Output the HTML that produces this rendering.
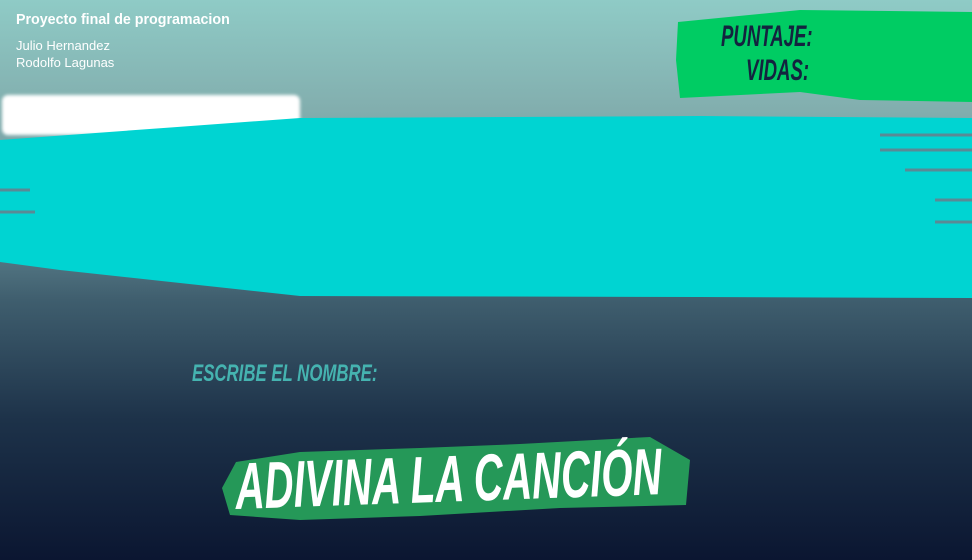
<!DOCTYPE html>
<html><head><meta charset="utf-8"><style>
body{margin:0;width:972px;height:560px;overflow:hidden;position:relative;font-family:"Liberation Sans",sans-serif;
background:linear-gradient(#8fcbc6 0px,#82aeae 110px,#6f98a0 200px,#3f5e6e 300px,#1d3249 420px,#0b1631 560px);}
.a{position:absolute}
.t{font-family:"Liberation Sans",sans-serif;font-weight:bold;font-style:italic;text-transform:uppercase;white-space:nowrap;transform-origin:left top}
</style></head><body>
<div class="a" style="left:16px;top:11px;color:#fff;font-size:15px;font-weight:bold;transform:scaleX(0.95);transform-origin:left">Proyecto final de programacion</div>
<div class="a" style="left:16px;top:37px;color:#fff;font-size:13px;line-height:17px">Julio Hernandez<br>Rodolfo Lagunas</div>
<div class="a" style="left:2px;top:95px;width:298px;height:40px;background:#fff;border-radius:6px;filter:blur(1.5px)"></div>
<svg class="a" style="left:0;top:0" width="972" height="560">
<path d="M0 140 L300 118 L700 116 L972 118 L972 298 L700 297 L300 296 L60 270 L0 262 Z" fill="#00d4d2"/>
<path d="M0 190 L30 190 M0 212 L35 212 M905 170 L972 170 M935 200 L972 200 M935 222 L972 222 M880 135 L972 135 M880 150 L972 150" stroke="#5a8a95" stroke-width="3"/>
<path d="M678 22 L800 10 L972 12 L972 102 L860 100 L800 92 L680 98 L676 60 Z" fill="#00cc63"/>
<path d="M236 462 L300 452 L420 448 L520 444 L650 437 L690 460 L686 505 L560 508 L420 516 L300 520 L230 515 L222 488 Z" fill="#259858"/>
</svg>
<div class="a t" style="left:721px;top:20px;color:#13233f;font-size:30px;transform:scaleX(0.62)">Puntaje:</div>
<div class="a t" style="left:746px;top:54px;color:#13233f;font-size:30px;transform:scaleX(0.62)">Vidas:</div>
<div class="a t" style="left:192px;top:360px;color:#45b3b0;font-size:24px;transform:scaleX(0.7)">Escribe el nombre:</div>
<div class="a t" style="left:234px;top:448px;color:#fff;font-size:66px;transform:rotate(-2deg) scaleX(0.61)">Adivina la canción</div>
</body></html>
